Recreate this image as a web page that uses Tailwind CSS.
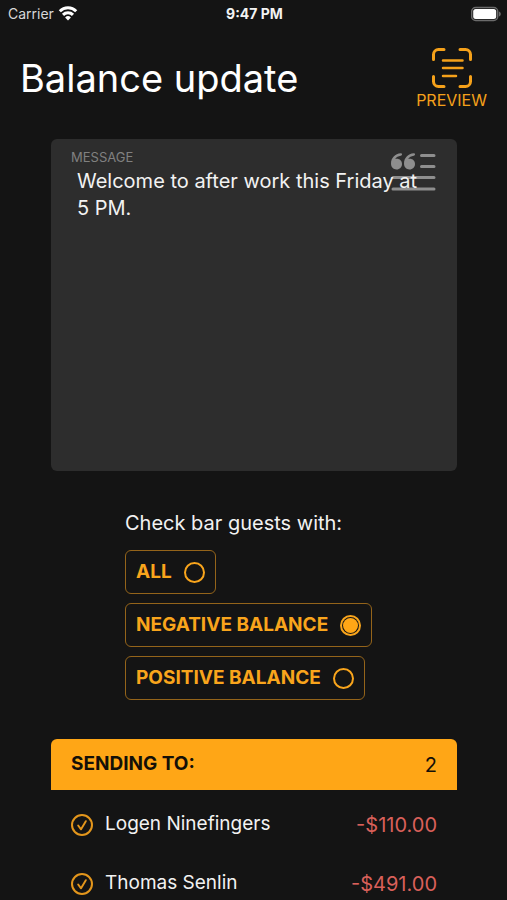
<!DOCTYPE html>
<html lang="en">
<head>
    <meta charset="UTF-8">
    <meta name="viewport" content="width=device-width, initial-scale=1.0">
    <title>Balance update</title>
    <script src="https://cdn.jsdelivr.net/npm/@tailwindcss/browser@4"></script>
</head>
<body class="bg-[#141414] text-[#f2f2f2] font-['Inter',sans-serif] h-screen overflow-hidden">
    <!-- status bar -->
    <div class="grid grid-cols-3 items-center h-7 pl-2 pr-[6px] text-sm">
        <div class="flex items-center gap-1 text-[#d8d8d8]">
            <span>Carrier</span>
            <svg class="w-5 h-4" viewBox="0 0 20 16" fill="none" stroke="#fff" stroke-width="3">
                <path d="M1.8 5.2a11.6 11.6 0 0 1 16.4 0"/>
                <path d="M5 8.900a7.1 7.1 0 0 1 10 0"/>
                <path d="M10 14.500l-2.900-3a4.100 4.100 0 0 1 5.800 0z" fill="#fff" stroke="none"/>
            </svg>
        </div>
        <div class="text-center font-bold">9:47 PM</div>
        <svg class="w-[30px] h-4 justify-self-end" viewBox="1 0 30 16">
            <rect x="1.7" y="1.5" width="26" height="13" rx="4" fill="#141414" stroke="#6b6b6b" stroke-width="1.5"/>
            <rect x="3.2" y="3" width="23" height="10" rx="2.5" fill="#fff"/>
            <path d="M29 5.5c2.4.9 2.4 4.1 0 5z" fill="#6b6b6b"/>
        </svg>
    </div>

    <header class="flex items-start justify-between pl-5 pr-5 pt-5">
        <h1 class="text-[38px] leading-[60px] text-white">Balance update</h1>
        <button type="button" class="flex flex-col items-center text-[#f5a11a] text-base leading-6">
            <svg class="w-10 h-10" viewBox="0 0 40 40" fill="none" stroke="currentColor" stroke-width="3" stroke-linecap="round">
                <path d="M1.500 11.500V6.500a5 5 0 0 1 5-5H12M28 1.500h5.500a5 5 0 0 1 5 5v5M38.500 28.500v5a5 5 0 0 1-5 5H28M12 38.500H6.500a5 5 0 0 1-5-5v-5"/>
                <path d="M11 12.500h19.500M11 20h19.500M11 28h13" stroke-width="2.500"/>
            </svg>
            PREVIEW
        </button>
    </header>

    <main class="ml-[51px] mr-[50px] mt-[27px]">
        <!-- message -->
        <div class="relative flex flex-col h-[332px] rounded-md bg-[#2d2d2d] pl-5 pr-5 pt-2">
            <label for="message" class="text-[13px] leading-5 text-[#808080]">MESSAGE</label>
            <svg class="absolute top-3 right-[21px] w-[46px] h-10" viewBox="0 0 46 40" fill="#8e8e8e">
                <path id="quote" d="M10.800 2.200C5 2.700 1 6.800 1 12.500c0 3.500 2.300 5.900 5.500 5.900s5.500-2.400 5.500-5.500c0-2.900-2.200-5.100-5.100-5.100-.7 0-1.300.1-1.800.3C6.300 6.200 8.300 5.200 10.800 4.800c1.700-.3 1.700-2.700 0-2.600z"/>
                <use href="#quote" x="13"/>
                <path d="M31.500 4.500h12.500M31.500 15.500h12.500M3 26.500h41M3 38h41" stroke="#8e8e8e" stroke-width="3" stroke-linecap="round"/>
            </svg>
            <textarea id="message" class="relative block flex-1 w-full resize-none outline-none pt-px pl-[6px] pr-[6px] text-xl leading-[27px] text-[#f2f2f2]">Welcome to after work this Friday at 5 PM.</textarea>
        </div>

        <!-- guest filter -->
        <fieldset class="flex flex-col items-start gap-[9px] pl-[74px] mt-[38px] text-[#f9a51c] text-[19px] font-bold">
            <legend class="mb-[13px] text-xl leading-7 font-normal text-[#f2f2f2]">Check bar guests with:</legend>
            <label class="flex items-center gap-3 h-11 px-[10px] border border-[#94641a] rounded-md">
                ALL
                <input type="radio" name="balance" class="appearance-none size-[21px] rounded-full border-2 border-[#f9a51c] p-[1px] bg-clip-content checked:bg-[#ffa616]">
            </label>
            <label class="flex items-center gap-3 h-11 px-[10px] border border-[#94641a] rounded-md">
                NEGATIVE BALANCE
                <input type="radio" name="balance" checked class="appearance-none size-[21px] rounded-full border-2 border-[#f9a51c] p-[1px] bg-clip-content checked:bg-[#ffa616]">
            </label>
            <label class="flex items-center gap-3 h-11 px-[10px] border border-[#94641a] rounded-md">
                POSITIVE BALANCE
                <input type="radio" name="balance" class="appearance-none size-[21px] rounded-full border-2 border-[#f9a51c] p-[1px] bg-clip-content checked:bg-[#ffa616]">
            </label>
        </fieldset>

        <!-- recipients -->
        <section class="mt-[39px] text-[19px]">
            <div class="flex items-center justify-between h-[51px] px-5 rounded-t-md bg-[#ffa616] text-[#141008]">
                <h2 class="font-bold">SENDING TO:</h2>
                <span class="text-xl">2</span>
            </div>
            <ul class="pt-[5px] px-5">
                <li class="flex items-center justify-between h-[59px]">
                    <label class="flex items-center gap-3">
                        <span class="grid size-[22px]">
                            <input type="checkbox" checked class="peer appearance-none col-start-1 row-start-1 size-full rounded-full border-2 border-[#e3961c]">
                            <svg class="col-start-1 row-start-1 size-full invisible peer-checked:visible pointer-events-none" viewBox="0 0 23 23" fill="none" stroke="#e3961c" stroke-width="2" stroke-linecap="round" stroke-linejoin="round"><path d="M7.500 12l3 4 5-8.500"/></svg>
                        </span>
                        Logen Ninefingers
                    </label>
                    <span class="text-xl text-[#d9605a]">-$110.00</span>
                </li>
                <li class="flex items-center justify-between h-[59px]">
                    <label class="flex items-center gap-3">
                        <span class="grid size-[22px]">
                            <input type="checkbox" checked class="peer appearance-none col-start-1 row-start-1 size-full rounded-full border-2 border-[#e3961c]">
                            <svg class="col-start-1 row-start-1 size-full invisible peer-checked:visible pointer-events-none" viewBox="0 0 23 23" fill="none" stroke="#e3961c" stroke-width="2" stroke-linecap="round" stroke-linejoin="round"><path d="M7.500 12l3 4 5-8.500"/></svg>
                        </span>
                        Thomas Senlin
                    </label>
                    <span class="text-xl text-[#d9605a]">-$491.00</span>
                </li>
            </ul>
        </section>
    </main>
</body>
</html>
